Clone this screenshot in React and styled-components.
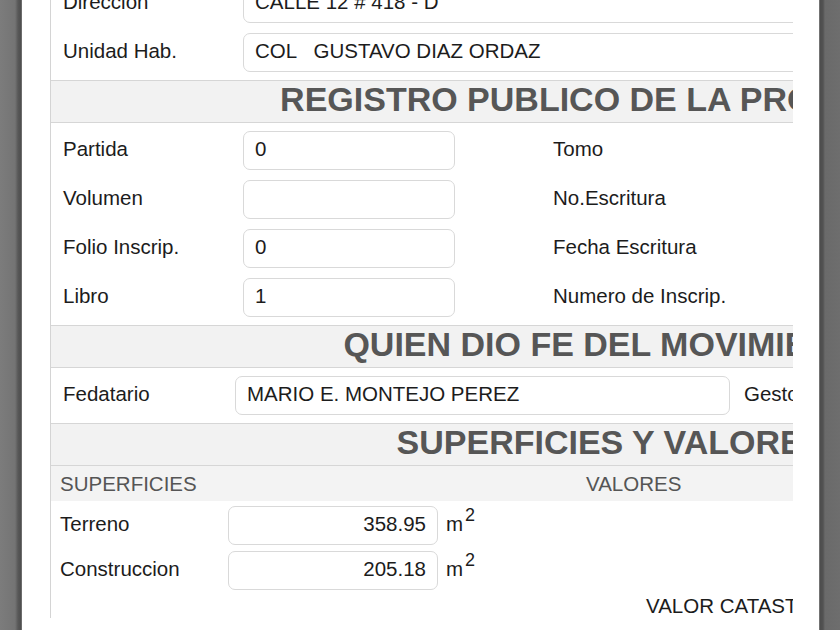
import React from "react";
import styled, { createGlobalStyle } from "styled-components";

const GlobalStyle = createGlobalStyle`
  html, body {
    margin: 0;
    padding: 0;
    background: #fff;
  }
  body {
    font-family: "Liberation Sans", Arial, sans-serif;
    color: #1c1c1c;
  }
`;

function App() {
  return (
    <>
      <GlobalStyle />
      <Frame>
        <LeftBezel />
        <Paper>
          <Viewport>
            <Form>
              <Section>
                <WideRow>
                  <Label>Direccion</Label>
                  <Field readOnly defaultValue="CALLE 12 # 418 - D" />
                </WideRow>
                <WideRow>
                  <Label>Unidad Hab.</Label>
                  <Field readOnly defaultValue="COL   GUSTAVO DIAZ ORDAZ" />
                </WideRow>
              </Section>

              <Band>REGISTRO PUBLICO DE LA PROPIEDAD</Band>
              <Section>
                <RegistroRow>
                  <Label>Partida</Label>
                  <Field readOnly defaultValue="0" />
                  <span />
                  <Label>Tomo</Label>
                  <Field readOnly defaultValue="0" />
                </RegistroRow>
                <RegistroRow>
                  <Label>Volumen</Label>
                  <Field readOnly defaultValue="" />
                  <span />
                  <Label>No.Escritura</Label>
                  <Field readOnly defaultValue="" />
                </RegistroRow>
                <RegistroRow>
                  <Label>Folio Inscrip.</Label>
                  <Field readOnly defaultValue="0" />
                  <span />
                  <Label>Fecha Escritura</Label>
                  <Field readOnly defaultValue="" />
                </RegistroRow>
                <RegistroRow>
                  <Label>Libro</Label>
                  <Field readOnly defaultValue="1" />
                  <span />
                  <Label>Numero de Inscrip.</Label>
                  <Field readOnly defaultValue="0" />
                </RegistroRow>
              </Section>

              <Band>QUIEN DIO FE DEL MOVIMIENTO</Band>
              <Section>
                <FedatarioRow>
                  <Label>Fedatario</Label>
                  <Field readOnly defaultValue="MARIO E. MONTEJO PEREZ" />
                  <SideLabel>Gestor</SideLabel>
                  <Field readOnly defaultValue="" />
                </FedatarioRow>
              </Section>

              <Band>SUPERFICIES Y VALORES</Band>
              <SubHead>
                <span>SUPERFICIES</span>
                <span>VALORES</span>
              </SubHead>
              <AreaSection>
                <AreaRow>
                  <Label>Terreno</Label>
                  <Field readOnly align="right" defaultValue="358.95" />
                  <Unit>
                    m<sup>2</sup>
                  </Unit>
                </AreaRow>
                <AreaRow>
                  <Label>Construccion</Label>
                  <Field readOnly align="right" defaultValue="205.18" />
                  <Unit>
                    m<sup>2</sup>
                  </Unit>
                </AreaRow>
                <TotalRow>VALOR CATASTRAL</TotalRow>
              </AreaSection>
            </Form>
          </Viewport>
        </Paper>
        <RightBezel />
      </Frame>
    </>
  );
}

const Frame = styled.div`
  display: flex;
  width: 840px;
  height: 630px;
  overflow: hidden;
`;

const LeftBezel = styled.div`
  width: 22px;
  flex-shrink: 0;
  background: linear-gradient(
    to right,
    #7c7c7c 0px,
    #747474 15px,
    #585858 18px,
    #4e4e4e 21px,
    #8a8a8a 22px
  );
`;

const RightBezel = styled.div`
  width: 22px;
  flex-shrink: 0;
  background: linear-gradient(
    to right,
    #9a9a9a 0px,
    #4c4c4c 1px,
    #525252 4px,
    #6a6a6a 6px,
    #6e6e6e 22px
  );
`;

const Paper = styled.div`
  flex: 1;
  background: #fff;
  padding: 0 26px 0 28px;
`;

const Viewport = styled.div`
  width: 742px;
  height: 618px;
  overflow: hidden;
  border-left: 1px solid #d4d4d4;
`;

const Form = styled.div`
  width: 1120px;
  margin-top: -24px;
  font-size: 20.5px;
`;

const Section = styled.div`
  display: flex;
  flex-direction: column;
  gap: 10px;
  padding: 8px 0;
`;

const Label = styled.div`
  color: #1c1c1c;
  white-space: nowrap;
  padding-bottom: 4px;
`;

const SideLabel = styled(Label)`
  margin-left: 14px;
`;

const Field = styled.input`
  box-sizing: border-box;
  height: 39px;
  width: 100%;
  padding: 0 11px 4px;
  border: 1px solid #d9d9d9;
  border-radius: 7px;
  background: #fff;
  font-family: "Liberation Sans", Arial, sans-serif;
  font-size: 20.5px;
  color: #1c1c1c;
  text-align: ${(props) => props.align || "left"};
  white-space: pre;
  outline: none;
`;

const WideRow = styled.div`
  display: grid;
  grid-template-columns: 180px 1fr;
  align-items: center;
  padding: 0 40px 0 12px;
`;

const RegistroRow = styled.div`
  display: grid;
  grid-template-columns: 180px 212px 98px 270px 212px;
  align-items: center;
  padding-left: 12px;
`;

const FedatarioRow = styled.div`
  display: grid;
  grid-template-columns: 172px 495px 110px 280px;
  align-items: center;
  padding-left: 12px;
`;

const Band = styled.div`
  box-sizing: border-box;
  height: 43px;
  border-top: 1px solid #d6d6d6;
  border-bottom: 1px solid #d6d6d6;
  background: #f2f2f2;
  color: #565656;
  font-size: 34px;
  font-weight: 700;
  line-height: 37px;
  text-align: center;
  white-space: nowrap;
`;

const SubHead = styled.div`
  display: grid;
  grid-template-columns: 526px auto;
  height: 35px;
  align-items: center;
  padding-left: 9px;
  background: #f3f3f3;
  color: #555;
`;

const AreaSection = styled.div`
  display: flex;
  flex-direction: column;
  gap: 6px;
  padding-top: 5px;
`;

const AreaRow = styled.div`
  display: grid;
  grid-template-columns: 168px 210px auto;
  align-items: center;
  padding-left: 9px;
`;

const Unit = styled.div`
  color: #1c1c1c;
  margin-left: 8px;
  padding-bottom: 4px;
  sup {
    font-size: 18px;
    vertical-align: 10px;
    line-height: 0;
    margin-left: 2px;
  }
`;

const TotalRow = styled.div`
  padding-left: 595px;
  line-height: 24px;
  margin-top: -2px;
  color: #1c1c1c;
  white-space: nowrap;
`;

export default App;
